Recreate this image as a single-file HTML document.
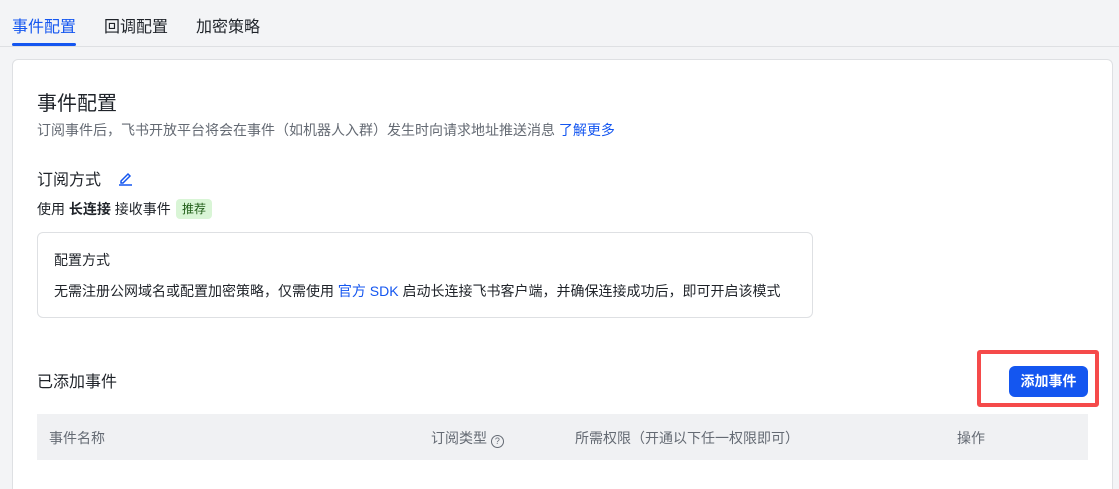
<!DOCTYPE html>
<html style="width:1119px;height:489px;overflow:hidden"><head><meta charset="utf-8"><style>
*{margin:0;padding:0;box-sizing:border-box}
body{width:1119px;height:489px;background:#f3f4f6;font-family:"Liberation Sans","Noto Sans CJK SC",sans-serif;position:relative;overflow:hidden;color:#1f2329}
.a{position:absolute;white-space:nowrap}
.tab{font-size:16px;top:13px}
.card{position:absolute;left:12px;top:59px;width:1101px;height:430px;background:#fff;border:1px solid #dee0e3;border-bottom:none;border-radius:6px 6px 0 0}
</style></head><body>
<div class="a tab" style="left:12px;color:#1456f0">事件配置</div>
<div class="a tab" style="left:104px">回调配置</div>
<div class="a tab" style="left:196px">加密策略</div>
<div class="a" style="left:12px;top:43px;width:64px;height:3px;background:#1456f0;border-radius:2px"></div>
<div class="a" style="left:0;top:46px;width:1119px;height:1px;background:#dee0e3"></div>
<div class="card"></div>
<div class="a" style="left:37px;top:87px;font-size:20px">事件配置</div>
<div class="a" style="left:37px;top:120px;font-size:14px;color:#646a73">订阅事件后，飞书开放平台将会在事件（如机器人入群）发生时向请求地址推送消息 <span style="color:#1456f0">了解更多</span></div>
<div class="a" style="left:37px;top:166px;font-size:16px">订阅方式</div>
<svg class="a" style="left:118px;top:170px" width="15" height="16" viewBox="0 0 15 16"><path d="M3 11 L10 4 L12 6 L5 13 L3 13 Z" fill="none" stroke="#1456f0" stroke-width="1.5"/><path d="M1 15 H14" stroke="#1456f0" stroke-width="1.5"/></svg>
<div class="a" style="left:37px;top:199px;font-size:14px">使用 <b>长连接</b> 接收事件</div>
<div class="a" style="left:176px;top:199px;width:36px;height:20px;background:#d9f5d6;border-radius:4px;font-size:12px;line-height:20px;text-align:center;color:#1f5c16">推荐</div>
<div class="a" style="left:37px;top:232px;width:776px;height:86px;border:1px solid #dee0e3;border-radius:6px"></div>
<div class="a" style="left:54px;top:250px;font-size:14px">配置方式</div>
<div class="a" style="left:54px;top:281px;font-size:14px">无需注册公网域名或配置加密策略，仅需使用 <span style="color:#1456f0">官方 SDK</span> 启动长连接飞书客户端，并确保连接成功后，即可开启该模式</div>
<div class="a" style="left:37px;top:368px;font-size:16px">已添加事件</div>
<div class="a" style="left:977px;top:350px;width:122px;height:57px;border:4px solid #f54a4a;border-radius:3px"></div>
<div class="a" style="left:1009px;top:366px;width:79px;height:31px;background:#1456f0;border-radius:6px;color:#fff;font-size:14px;line-height:31px;text-align:center;font-weight:bold">添加事件</div>
<div class="a" style="left:37px;top:414px;width:1051px;height:46px;background:#f0f1f3"></div>
<div class="a" style="left:49px;top:428px;font-size:14px;color:#646a73">事件名称</div>
<div class="a" style="left:431px;top:428px;font-size:14px;color:#646a73">订阅类型 <span style="display:inline-block;width:13px;height:13px;border:1px solid #646a73;border-radius:50%;font-size:9px;line-height:11px;text-align:center;vertical-align:-1px">?</span></div>
<div class="a" style="left:575px;top:428px;font-size:14px;color:#646a73">所需权限（开通以下任一权限即可）</div>
<div class="a" style="left:957px;top:428px;font-size:14px;color:#646a73">操作</div>
</body></html>
